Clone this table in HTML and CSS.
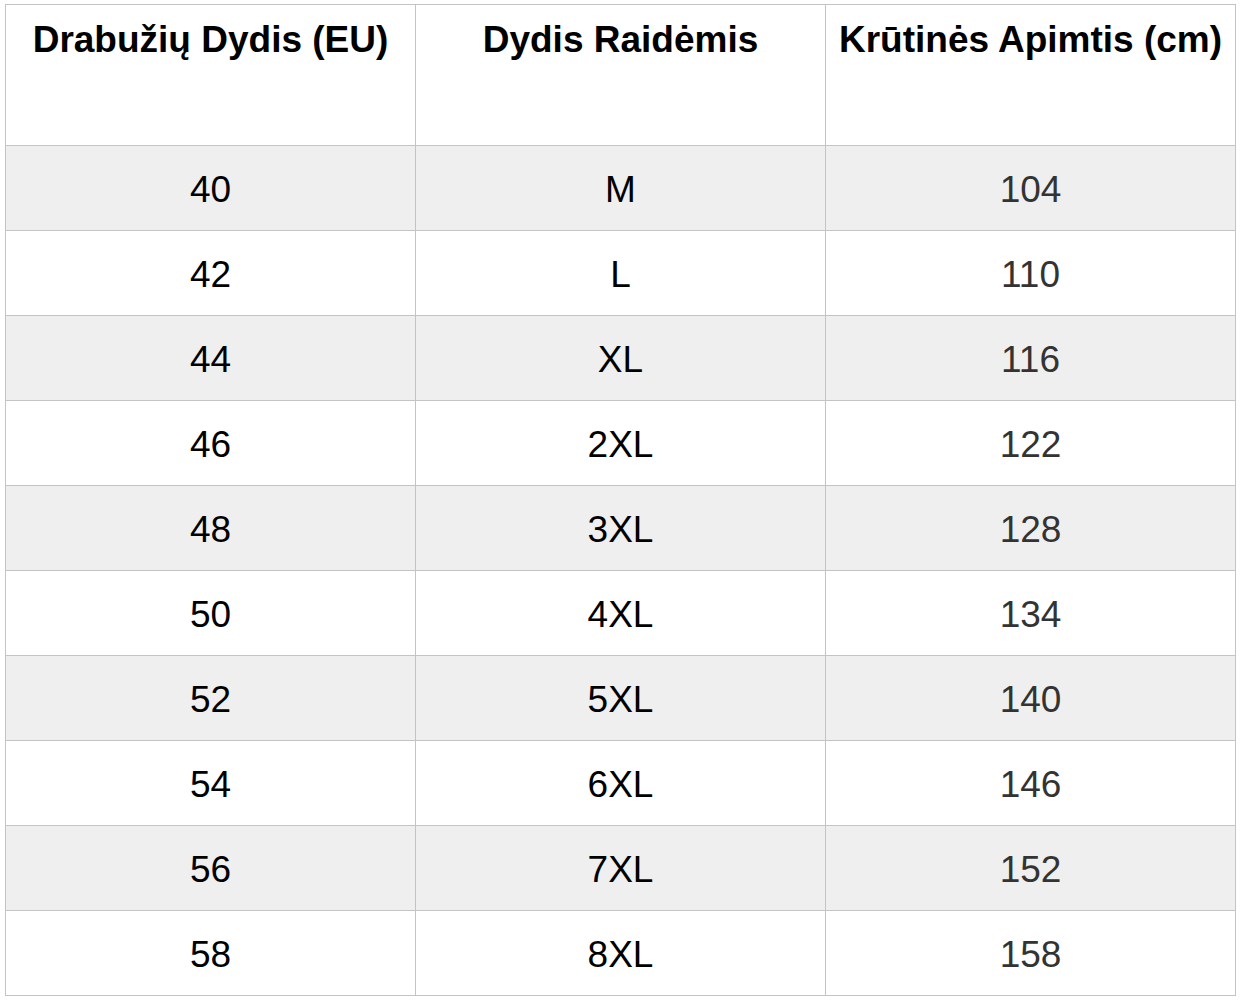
FILE: index.html
```html
<!DOCTYPE html>
<html lang="lt">
<head>
<meta charset="utf-8">
<title>Dydžių lentelė</title>
<link rel="stylesheet" href="styles.css">
</head>
<body>
<table class="size-table">
  <thead>
    <tr>
      <th>Drabužių Dydis (EU)</th>
      <th>Dydis Raidėmis</th>
      <th>Krūtinės Apimtis (cm)</th>
    </tr>
  </thead>
  <tbody>
    <tr><td>40</td><td>M</td><td class="num">104</td></tr>
    <tr><td>42</td><td>L</td><td class="num">110</td></tr>
    <tr><td>44</td><td>XL</td><td class="num">116</td></tr>
    <tr><td>46</td><td>2XL</td><td class="num">122</td></tr>
    <tr><td>48</td><td>3XL</td><td class="num">128</td></tr>
    <tr><td>50</td><td>4XL</td><td class="num">134</td></tr>
    <tr><td>52</td><td>5XL</td><td class="num">140</td></tr>
    <tr><td>54</td><td>6XL</td><td class="num">146</td></tr>
    <tr><td>56</td><td>7XL</td><td class="num">152</td></tr>
    <tr><td>58</td><td>8XL</td><td class="num">158</td></tr>
  </tbody>
</table>
</body>
</html>
```
FILE: styles.css
```css
html, body {
  margin: 0;
  padding: 0;
  background: #ffffff;
}
body {
  padding: 4px 0 0 5px;
  font-family: "Liberation Sans", Arial, sans-serif;
  color: #000;
}
.size-table {
  border-collapse: collapse;
  width: 1231px;
  table-layout: fixed;
}
.size-table th,
.size-table td {
  border: 1px solid #c4c4c4;
  text-align: center;
  padding: 0;
}
.size-table th {
  height: 141px;
  vertical-align: top;
  padding-top: 14px;
  font-size: 37px;
  font-weight: bold;
  line-height: 42px;
  box-sizing: border-box;
}
.size-table td {
  height: 85px;
  box-sizing: border-box;
  padding-top: 4px;
  font-size: 37px;
  line-height: 42px;
  vertical-align: middle;
}
.size-table tbody tr:nth-child(odd) td {
  background: #efefef;
}
.size-table td.num {
  color: #333333;
}
```
